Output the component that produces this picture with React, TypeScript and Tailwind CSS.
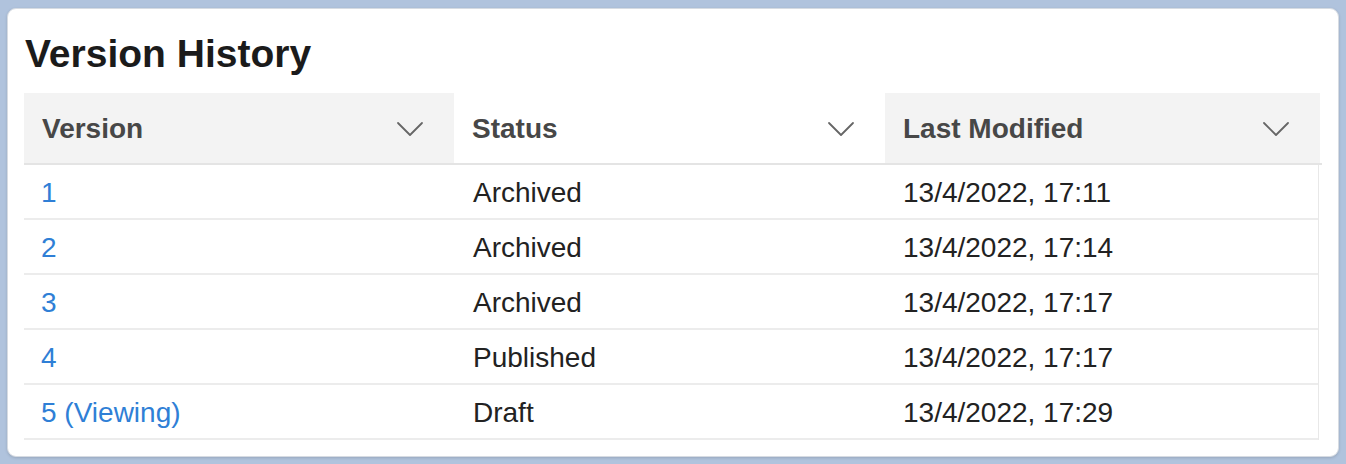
const rows = [
  { version: '1', status: 'Archived', modified: '13/4/2022, 17:11' },
  { version: '2', status: 'Archived', modified: '13/4/2022, 17:14' },
  { version: '3', status: 'Archived', modified: '13/4/2022, 17:17' },
  { version: '4', status: 'Published', modified: '13/4/2022, 17:17' },
  { version: '5 (Viewing)', status: 'Draft', modified: '13/4/2022, 17:29' },
];

function Chevron() {
  return (
    <svg width="28" height="16" viewBox="0 0 28 16" fill="none" className="text-[#666]">
      <path d="M2 2 L14 14 L26 2" stroke="currentColor" strokeWidth="1.8" strokeLinecap="round" strokeLinejoin="round" />
    </svg>
  );
}

function HeaderCell({ label, active }: { label: string; active?: boolean }) {
  return (
    <div className={`flex items-center justify-between pl-[18px] pr-[30px] pt-[2px] ${active ? 'bg-white' : 'bg-[#f3f3f3]'}`}>
      <span className="font-bold text-[#474747]">{label}</span>
      <Chevron />
    </div>
  );
}

export default function App() {
  return (
    <div className="h-[464px] w-[1346px] bg-[#b0c3dd] p-[7px] pb-[7px] pt-[8px] font-['Liberation_Sans',Arial,sans-serif]">
      <div className="h-[449px] rounded-[9px] border border-[#d6dbe2] bg-white px-[16px] pt-[22px] shadow-[0_1px_3px_rgba(0,0,0,0.15)]">
        <h1 className="pl-[1px] text-[39px] font-bold leading-[46px] text-[#1b1b1b]">Version History</h1>
        <div className="mt-[16px] text-[28px]">
          <div className="grid h-[72px] grid-cols-[430px_431px_435px] border-b-[2px] border-[#e4e4e4]">
            <HeaderCell label="Version" />
            <HeaderCell label="Status" active />
            <HeaderCell label="Last Modified" />
          </div>
          <div className="mr-[3px] border-r border-[#e8e8e8]">
            {rows.map((r) => (
              <div key={r.version} className="grid h-[55px] grid-cols-[430px_431px_432px] items-center border-b-[2px] border-[#ececec] pt-[3px]">
                <span className="pl-[17px] text-[#2f7fd6]">{r.version}</span>
                <span className="pl-[19px] text-[#222]">{r.status}</span>
                <span className="pl-[18px] text-[#222]">{r.modified}</span>
              </div>
            ))}
          </div>
        </div>
      </div>
    </div>
  );
}
